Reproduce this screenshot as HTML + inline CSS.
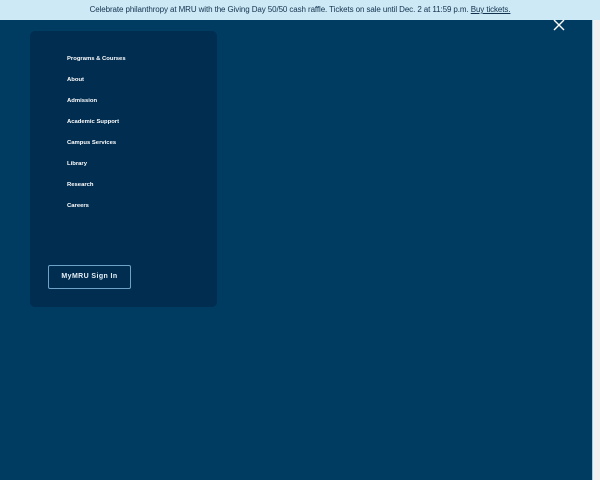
<!DOCTYPE html>
<html><head><meta charset="utf-8"><style>
html,body{margin:0;padding:0;width:600px;height:480px;overflow:hidden;background:#003b62;font-family:"Liberation Sans",sans-serif;}
.banner{position:absolute;left:0;top:0;width:600px;height:20px;background:#cde9f5;color:#12324f;font-size:8px;line-height:20px;text-align:center;letter-spacing:-0.1px}
.banner u{text-decoration:underline}
.sb{position:absolute;right:0;top:20px;width:7px;height:460px;background:#f0f0f0;border-left:1px solid #9fd0ea}
.close{position:absolute;left:553px;top:19px}
.panel{position:absolute;left:30px;top:31px;width:187px;height:276px;background:#002d50;border-radius:5px}
.nav{position:absolute;left:37px;top:23px;margin:0;padding:0;list-style:none}
.nav li{color:#fff;font-size:5.9px;font-weight:bold;height:21px;line-height:10px}
.btn{position:absolute;left:18px;top:234px;width:81px;height:22px;border:1px solid #6ea3c7;border-radius:2px;color:#e6f0f7;font-size:7px;font-weight:bold;text-align:center;line-height:22px;letter-spacing:0.4px;box-sizing:content-box}
</style></head><body>
<div class="banner">Celebrate philanthropy at MRU with the Giving Day 50/50 cash raffle. Tickets on sale until Dec. 2 at 11:59 p.m. <u>Buy tickets.</u></div>
<svg class="close" width="12" height="12" viewBox="0 0 12 12"><path d="M1 1L11 11M11 1L1 11" stroke="#fff" stroke-width="1.4"/></svg>
<div class="sb"></div>
<div class="panel">
<ul class="nav">
<li>Programs &amp; Courses</li><li>About</li><li>Admission</li><li>Academic Support</li><li>Campus Services</li><li>Library</li><li>Research</li><li>Careers</li>
</ul>
<div class="btn">MyMRU Sign In</div>
</div>
</body></html>
